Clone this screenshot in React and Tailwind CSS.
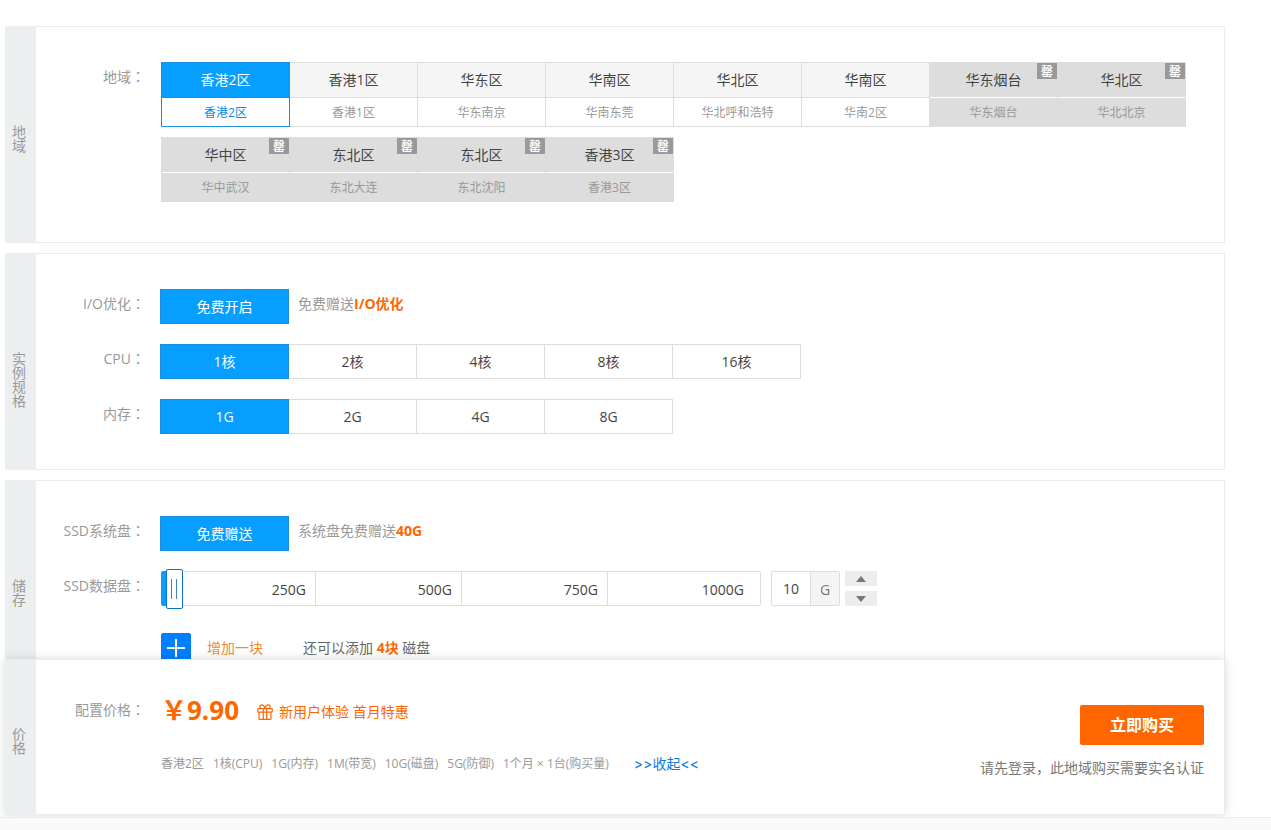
import React, { useState } from 'react';
import { Plus } from 'lucide-react';

const REGIONS = [
  { id: 'hk2', name: '香港2区', sub: '香港2区' },
  { id: 'hk1', name: '香港1区', sub: '香港1区' },
  { id: 'nj', name: '华东区', sub: '华东南京' },
  { id: 'dg', name: '华南区', sub: '华南东莞' },
  { id: 'hhht', name: '华北区', sub: '华北呼和浩特' },
  { id: 'hn2', name: '华南区', sub: '华南2区' },
  { id: 'yt', name: '华东烟台', sub: '华东烟台', soldOut: true },
  { id: 'bj', name: '华北区', sub: '华北北京', soldOut: true },
  { id: 'wh', name: '华中区', sub: '华中武汉', soldOut: true },
  { id: 'dl', name: '东北区', sub: '东北大连', soldOut: true },
  { id: 'sy', name: '东北区', sub: '东北沈阳', soldOut: true },
  { id: 'hk3', name: '香港3区', sub: '香港3区', soldOut: true },
];

const CPUS = ['1核', '2核', '4核', '8核', '16核'];
const MEMORY = ['1G', '2G', '4G', '8G'];

function GiftIcon() {
  return (
    <svg width="16" height="16" viewBox="0 0 16 16" fill="none" stroke="currentColor" strokeWidth="1.2" strokeLinejoin="round">
      <rect x="0.8" y="4.6" width="14.4" height="3.6" rx="0.6" />
      <path d="M2 8.2v6.2c0 .6.3.9.9.9h10.2c.6 0 .9-.3.9-.9V8.2" />
      <path d="M6.3 4.6v10.7M9.7 4.6v10.7" />
      <path d="M8 4.4C7.4 2.2 6 .8 4.6.8 3.4.8 2.8 1.6 2.8 2.5c0 1 .8 2 2 2M8 4.4C8.600 2.200 10 .8 11.400.8c1.200 0 1.800.8 1.800 1.700 0 1-.8 2-2 2" />
    </svg>
  );
}

function Section({ title, titleClass = 'pt-[99px]', className = '', children }) {
  return (
    <section className={`flex bg-white ${className}`}>
      <h2 className={`w-[31px] shrink-0 bg-[#ebeff0] pr-[10px] pl-[7px] text-center text-sm leading-[14px] text-[#999] ${titleClass}`}>
        {title}
      </h2>
      <div className="flex-1 min-w-0 border border-l-0 border-[#eaeaea] pt-[35px]">{children}</div>
    </section>
  );
}

function Row({ label, className = '', children }) {
  return (
    <div className={`flex items-start gap-4 ${className}`}>
      <div className="w-[109px] shrink-0 text-right leading-[30px] text-[#999]">
        {label}
        {label && <span className="font-['Noto_Sans_CJK_TC',sans-serif] leading-none">：</span>}
      </div>
      {children}
    </div>
  );
}

function Option({ active, onClick, children }) {
  return (
    <button
      type="button"
      aria-pressed={active}
      onClick={onClick}
      className={`relative -ml-px h-[35px] w-[129px] shrink-0 border cursor-pointer ${
        active ? 'z-10 border-[#1b8fdc] bg-[#069fff] text-white' : 'border-[#ddd] bg-white text-[#444]'
      }`}
    >
      {children}
    </button>
  );
}

function OptionGroup({ options, value, onChange }) {
  return (
    <div className="flex">
      {options.map((option) => (
        <Option key={option} active={option === value} onClick={() => onChange(option)}>
          {option}
        </Option>
      ))}
    </div>
  );
}

function RegionCard({ region, active, onClick }) {
  const getCardStyle = () => {
    if (region.soldOut) return 'border-[#ddd] bg-[#ddd]';
    if (active) return 'z-10 border-[#1b8fdc] bg-white';
    return 'border-[#ddd] bg-white';
  };

  const getNameStyle = () => {
    if (region.soldOut) return 'border-white text-[#444]';
    if (active) return 'border-[#1b8fdc] bg-[#069fff] text-white';
    return 'border-[#ddd] bg-[#f5f5f5] text-[#444]';
  };

  return (
    <button
      type="button"
      disabled={region.soldOut}
      aria-pressed={active}
      onClick={onClick}
      className={`relative -mr-px h-[65px] w-[129px] border ${getCardStyle()}`}
    >
      <span className={`block h-[35px] border-b leading-[34px] ${getNameStyle()}`}>{region.name}</span>
      <span className={`block pt-[2px] text-xs leading-[26px] ${active ? 'text-[#0a8be6]' : 'text-[#999]'}`}>{region.sub}</span>
      {region.soldOut && (
        <span className="absolute top-0 right-0 h-4 w-5 bg-[#999] text-xs leading-[17px] font-bold text-white">罄</span>
      )}
    </button>
  );
}

function DiskSlider({ value, onChange }) {
  return (
    <div className="relative flex h-[35px] w-[600px] rounded-xs border border-[#ddd] text-right leading-[35px] text-[#444]">
      <div className="w-[154px] border-r border-[#ddd] pr-[9px]">250G</div>
      <div className="w-[146px] border-r border-[#ddd] pr-[9px]">500G</div>
      <div className="w-[146px] border-r border-[#ddd] pr-[9px]">750G</div>
      <div className="flex-1 pr-4">1000G</div>
      <div className="absolute -inset-y-px -left-px rounded-l-xs bg-[#069fff]" style={{ width: 5 + value * 0.58 }} />
      <input
        type="range"
        aria-label="SSD数据盘容量"
        min="0"
        max="1000"
        step="10"
        value={value}
        onChange={(e) => onChange(Number(e.target.value))}
        className="absolute -inset-x-[2px] -top-[3px] h-10 w-[602px] cursor-pointer appearance-none bg-transparent [&::-webkit-slider-thumb]:h-10 [&::-webkit-slider-thumb]:w-[17px] [&::-webkit-slider-thumb]:appearance-none [&::-webkit-slider-thumb]:rounded-xs [&::-webkit-slider-thumb]:border [&::-webkit-slider-thumb]:border-[#0a6fd0] [&::-webkit-slider-thumb]:bg-white [&::-webkit-slider-thumb]:bg-[linear-gradient(90deg,#3d86c8_1px,transparent_1px,transparent_5px,#3d86c8_5px)] [&::-webkit-slider-thumb]:bg-[length:6px_20px] [&::-webkit-slider-thumb]:bg-center [&::-webkit-slider-thumb]:bg-no-repeat"
      />
    </div>
  );
}

function DiskAmount({ value, onChange }) {
  return (
    <>
      <label className="ml-[10px] flex h-[35px] w-[69px] overflow-hidden rounded-xs border border-[#ddd]">
        <input
          type="text"
          aria-label="数据盘大小"
          value={value}
          onChange={(e) => onChange(Number(e.target.value) || 0)}
          className="w-[38px] text-center text-[#444] outline-none"
        />
        <span className="flex-1 border-l border-[#ddd] bg-[#f4f4f4] text-center leading-[35px] text-[#777]">G</span>
      </label>
      <div className="ml-[5px] flex flex-col gap-[5px]">
        <button
          type="button"
          aria-label="增加"
          onClick={() => onChange(Math.min(1000, value + 10))}
          className="flex h-[15px] w-8 items-center justify-center bg-[#ededed]"
        >
          <svg width="10" height="6" viewBox="0 0 10 6" fill="#777"><path d="M5 0l5 6H0z" /></svg>
        </button>
        <button
          type="button"
          aria-label="减少"
          onClick={() => onChange(Math.max(10, value - 10))}
          className="flex h-[15px] w-8 items-center justify-center bg-[#ededed]"
        >
          <svg width="10" height="6" viewBox="0 0 10 6" fill="#777"><path d="M0 0h10L5 6z" /></svg>
        </button>
      </div>
    </>
  );
}

export default function App() {
  const [region, setRegion] = useState('hk2');
  const [cpu, setCpu] = useState('1核');
  const [memory, setMemory] = useState('1G');
  const [disk, setDisk] = useState(10);

  const regionName = REGIONS.find((r) => r.id === region).name;
  const summary = [regionName, `${cpu}(CPU)`, `${memory}(内存)`, '1M(带宽)', `${disk}G(磁盘)`, '5G(防御)', '1个月 × 1台(购买量)'];

  return (
    <div className="flex min-h-screen flex-col bg-white font-['Open_Sans','Noto_Sans_CJK_SC',sans-serif] text-sm">
      <main className="mr-[46px] ml-[5px] flex flex-col gap-[10px] pt-[26px]">
        <Section title="地域" className="min-h-[217px]">
          <Row label="地域">
            <div className="flex flex-1 flex-wrap gap-y-[10px]">
              {REGIONS.map((r) => (
                <RegionCard key={r.id} region={r} active={r.id === region} onClick={() => setRegion(r.id)} />
              ))}
            </div>
          </Row>
        </Section>

        <Section title="实例规格" className="min-h-[217px]">
          <div className="flex flex-col gap-5">
            <Row label="I/O优化">
              <Option active>免费开启</Option>
              <p className="-ml-[7px] leading-[30px] text-[#999]">
                免费赠送<b className="text-[#f60]">I/O优化</b>
              </p>
            </Row>
            <Row label="CPU">
              <OptionGroup options={CPUS} value={cpu} onChange={setCpu} />
            </Row>
            <Row label="内存">
              <OptionGroup options={MEMORY} value={memory} onChange={setMemory} />
            </Row>
          </div>
        </Section>

        <Section title="储存" className="min-h-[217px]">
          <div className="flex flex-col gap-5">
            <Row label="SSD系统盘">
              <Option active>免费赠送</Option>
              <p className="-ml-[7px] leading-[30px] text-[#999]">
                系统盘免费赠送<b className="text-[#f60]">40G</b>
              </p>
            </Row>
            <Row label="SSD数据盘">
              <div className="flex">
                <DiskSlider value={disk} onChange={setDisk} />
                <DiskAmount value={disk} onChange={setDisk} />
              </div>
            </Row>
          </div>
          <Row className="mt-[27px]">
            <div className="flex leading-[30px]">
              <button type="button" className="flex cursor-pointer gap-4 text-[#f58a1f]">
                <span className="flex size-[30px] items-center justify-center rounded-xs bg-[#0080ff] text-white">
                  <Plus size={28} strokeWidth={1.75} />
                </span>
                增加一块
              </button>
              <p className="ml-10 text-[#666]">
                还可以添加 <b className="text-[#f60]">4块</b> 磁盘
              </p>
            </div>
          </Row>
        </Section>

        {/* price bar floats over the end of the storage section */}
        <Section
          title="价格"
          titleClass="pt-[68px]"
          className="relative z-20 -mt-12 min-h-[156px] shadow-[0_0_10px_rgba(0,0,0,0.15)]"
        >
          <div className="flex items-start justify-between pr-5">
            <div>
              <Row label="配置价格">
                <div className="flex h-[30px] items-center text-[#f60]">
                  <strong className="text-[26px] leading-[30px]">￥9.90</strong>
                  <span className="ml-[18px] flex items-center gap-[6px] pt-1 leading-5">
                    <GiftIcon />
                    新用户体验 首月特惠
                  </span>
                </div>
              </Row>
              <Row className="mt-[29px]">
                <div className="flex items-center gap-[9px] text-xs leading-5 text-[#999]">
                  {summary.map((item) => (
                    <span key={item}>{item}</span>
                  ))}
                  <a href="#summary" className="ml-4 font-['Inter','Noto_Sans_CJK_SC',sans-serif] text-sm leading-5 text-[#0a7ae6]">
                    &gt;&gt;收起&lt;&lt;
                  </a>
                </div>
              </Row>
            </div>
            <div className="flex flex-col items-end pt-[10px]">
              <button type="button" className="h-10 w-[124px] cursor-pointer rounded-xs bg-[#f60] text-base font-bold text-white">
                立即购买
              </button>
              <p className="mt-[13px] leading-5 text-[#777]">请先登录，此地域购买需要实名认证</p>
            </div>
          </div>
        </Section>
      </main>

      <footer className="relative z-30 mt-[2px] flex-1 border-t border-[#eaeaea] bg-[#f9f9f9]" />
    </div>
  );
}
